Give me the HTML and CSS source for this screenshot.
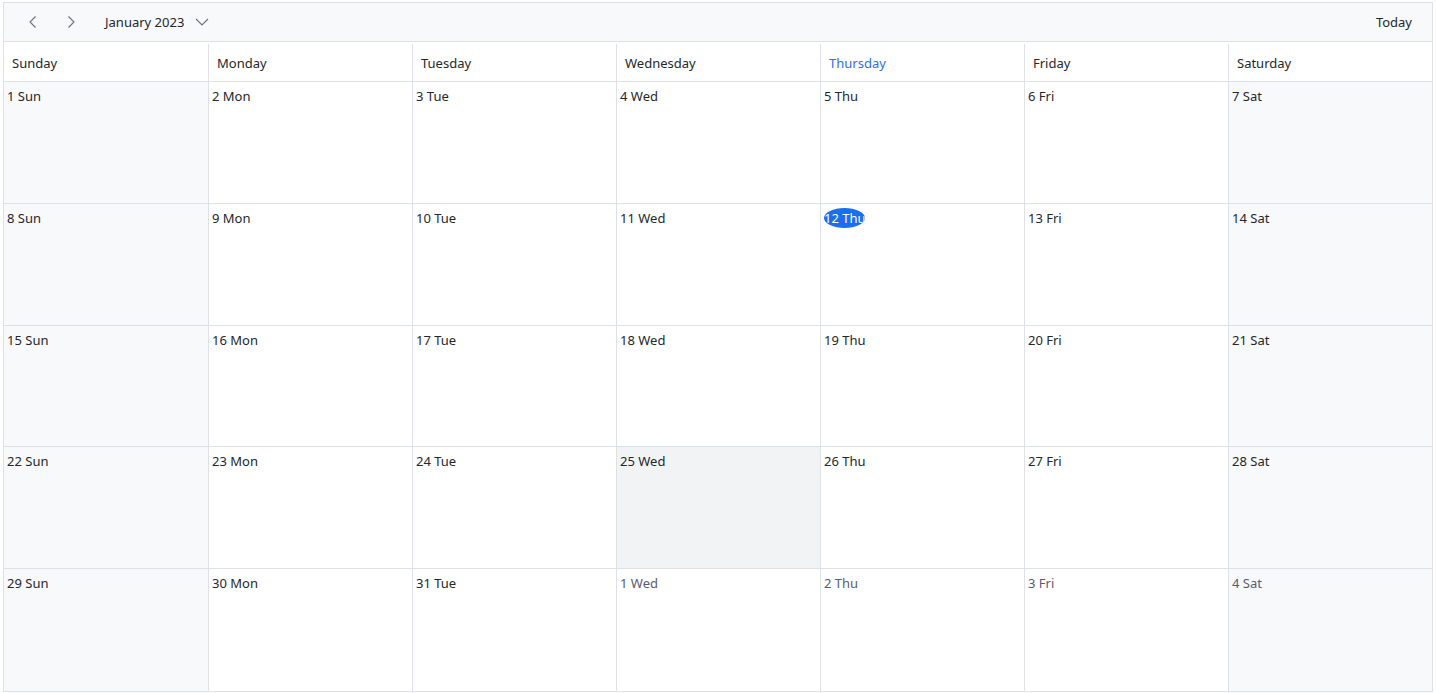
FILE: index.html
```html
<!DOCTYPE html>
<html>
<head>
<meta charset="utf-8">
<link rel="stylesheet" href="styles.css">
</head>
<body>
<div class="cal">
  <div class="toolbar">
    <button class="nav" aria-label="Previous"><svg width="16" height="16" viewBox="0 0 16 16"><path d="M10.5 2.5 5 8l5.5 5.5" fill="none" stroke="#6b7280" stroke-width="1.1"/></svg></button>
    <button class="nav" aria-label="Next"><svg width="16" height="16" viewBox="0 0 16 16"><path d="M5.5 2.5 11 8l-5.5 5.5" fill="none" stroke="#6b7280" stroke-width="1.1"/></svg></button>
    <button class="title">January 2023 <svg width="16" height="16" viewBox="0 0 16 16"><path d="M2 5l6 6 6-6" fill="none" stroke="#6b7280" stroke-width="1.1"/></svg></button>
    <span class="spacer"></span>
    <button class="today">Today</button>
  </div>
  <div class="head">
    <div class="hc">Sunday</div>
    <div class="hc">Monday</div>
    <div class="hc">Tuesday</div>
    <div class="hc">Wednesday</div>
    <div class="hc cur">Thursday</div>
    <div class="hc">Friday</div>
    <div class="hc">Saturday</div>
  </div>
  <div class="grid">
    <div class="c we"><span class="d">1 Sun</span></div>
    <div class="c"><span class="d">2 Mon</span></div>
    <div class="c"><span class="d">3 Tue</span></div>
    <div class="c"><span class="d">4 Wed</span></div>
    <div class="c"><span class="d">5 Thu</span></div>
    <div class="c"><span class="d">6 Fri</span></div>
    <div class="c we"><span class="d">7 Sat</span></div>

    <div class="c we"><span class="d">8 Sun</span></div>
    <div class="c"><span class="d">9 Mon</span></div>
    <div class="c"><span class="d">10 Tue</span></div>
    <div class="c"><span class="d">11 Wed</span></div>
    <div class="c"><span class="d now">12 Thu</span></div>
    <div class="c"><span class="d">13 Fri</span></div>
    <div class="c we"><span class="d">14 Sat</span></div>

    <div class="c we"><span class="d">15 Sun</span></div>
    <div class="c"><span class="d">16 Mon</span></div>
    <div class="c"><span class="d">17 Tue</span></div>
    <div class="c"><span class="d">18 Wed</span></div>
    <div class="c"><span class="d">19 Thu</span></div>
    <div class="c"><span class="d">20 Fri</span></div>
    <div class="c we"><span class="d">21 Sat</span></div>

    <div class="c we"><span class="d">22 Sun</span></div>
    <div class="c"><span class="d">23 Mon</span></div>
    <div class="c"><span class="d">24 Tue</span></div>
    <div class="c hover"><span class="d">25 Wed</span></div>
    <div class="c"><span class="d">26 Thu</span></div>
    <div class="c"><span class="d">27 Fri</span></div>
    <div class="c we"><span class="d">28 Sat</span></div>

    <div class="c we"><span class="d">29 Sun</span></div>
    <div class="c"><span class="d">30 Mon</span></div>
    <div class="c"><span class="d">31 Tue</span></div>
    <div class="c"><span class="d other">1 Wed</span></div>
    <div class="c"><span class="d other">2 Thu</span></div>
    <div class="c"><span class="d other">3 Fri</span></div>
    <div class="c we"><span class="d other">4 Sat</span></div>
  </div>
</div>
</body>
</html>
```
FILE: styles.css
```css
* { box-sizing: border-box; }
html, body { margin: 0; padding: 0; height: 100%; background: #fff; }
body {
  padding: 2px 3px 1px 3px;
  font-family: "Segoe UI", "Noto Sans", "Open Sans", sans-serif;
  font-size: 13px;
  color: #24272b;
}
.cal {
  height: 100%;
  border: 1px solid #dee2e6;
  display: flex;
  flex-direction: column;
}
.toolbar {
  height: 39px;
  flex: none;
  display: flex;
  align-items: center;
  background: #f8f9fa;
  border-bottom: 1px solid #dee2e6;
  padding: 0 20px 0 15px;
}
button {
  font: inherit;
  color: inherit;
  background: none;
  border: 0;
  padding: 0;
  cursor: pointer;
}
.nav {
  width: 28px;
  height: 28px;
  display: flex;
  align-items: center;
  justify-content: center;
  margin-right: 10px;
}
.title {
  display: flex;
  align-items: center;
  gap: 10px;
  margin-left: 10px;
}
.spacer { flex: 1; }
.head {
  height: 40px;
  flex: none;
  display: grid;
  grid-template-columns: repeat(7, 1fr);
  border-bottom: 1px solid #dee2e6;
  padding-top: 2px;
}
.hc {
  display: flex;
  align-items: center;
  padding-left: 8px;
  border-left: 1px solid #dee2e6;
}
.hc:first-child { border-left: 0; }
.hc.cur { color: #2f6ef5; }
.grid {
  flex: 1;
  display: grid;
  grid-template-columns: repeat(7, 1fr);
  grid-template-rows: repeat(5, 1fr);
}
.c {
  border-left: 1px solid #dee2e6;
  border-bottom: 1px solid #dee2e6;
  padding: 5px 0 0 3px;
}
.c:nth-child(7n+1) { border-left: 0; }
.c:nth-last-child(-n+7) { border-bottom: 0; }
.c.we { background: #f8f9fb; }
.c.hover { background: #f2f3f5; }
.d {
  display: inline-block;
  line-height: 18px;
}
.d.other { color: #585c70; }
.d.now {
  background: #1a6ef0;
  color: #fff;
  border-radius: 50%;
  padding: 1px 0 1px 0;
  margin-top: -1px;
  width: 41px;
  white-space: nowrap;
  overflow: hidden;
}
```
